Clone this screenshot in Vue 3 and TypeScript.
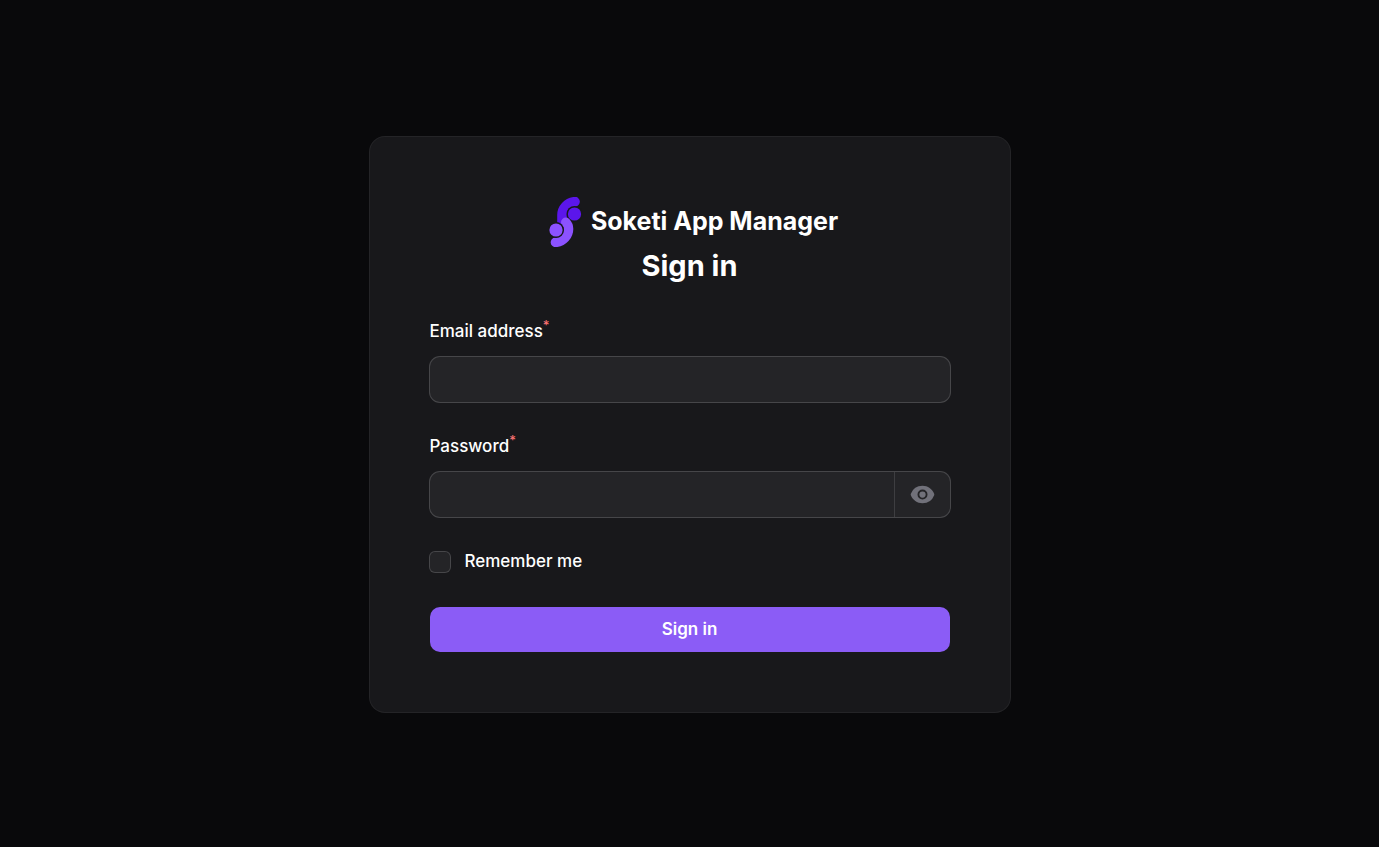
<script setup lang="ts">
import { ref } from 'vue'

const email = ref('')
const password = ref('')
const remember = ref(false)
const revealed = ref(false)
</script>

<template>
  <div class="page">
    <main class="card">
      <header class="header">
        <div class="brand">
          <svg class="logo" viewBox="1 0 50 50" aria-hidden="true">
            <path d="M35 4.6C27 5.4 22 11.5 22 18V25" fill="none" stroke="#5b16eb" stroke-width="9.6" stroke-linecap="round" />
            <circle cx="34.5" cy="17" r="8" fill="#18181b" />
            <circle cx="34.5" cy="17" r="6.6" fill="#5b16eb" />
            <path d="M15.5 45.4C23.5 44.6 28.5 38.5 28.5 32C28.5 29 27.5 27 25.8 25.3" fill="none" stroke="#8c52ff" stroke-width="9.6" stroke-linecap="round" />
            <circle cx="16" cy="33" r="8" fill="#18181b" />
            <circle cx="16" cy="33" r="6.6" fill="#8c52ff" />
          </svg>
          <span class="brand-name">Soketi App Manager</span>
        </div>
        <h1 class="title">Sign in</h1>
      </header>

      <form class="form" @submit.prevent>
        <div class="field">
          <label class="label" for="email">Email address<sup class="required">*</sup></label>
          <div class="control">
            <input id="email" v-model="email" class="input" type="email" autocomplete="email" required />
          </div>
        </div>

        <div class="field">
          <label class="label" for="password">Password<sup class="required">*</sup></label>
          <div class="control">
            <input id="password" v-model="password" class="input" :type="revealed ? 'text' : 'password'" autocomplete="current-password" required />
            <div class="suffix">
              <button class="reveal" type="button" aria-label="Show password" @click="revealed = !revealed">
                <svg viewBox="0 0 20 20" fill="currentColor" aria-hidden="true">
                  <path d="M10 12.5a2.5 2.5 0 1 0 0-5 2.5 2.5 0 0 0 0 5Z" />
                  <path fill-rule="evenodd" clip-rule="evenodd" d="M.664 10.59a1.651 1.651 0 0 1 0-1.186A10.004 10.004 0 0 1 10 3c4.257 0 7.893 2.66 9.336 6.41.147.381.146.804 0 1.186A10.004 10.004 0 0 1 10 17c-4.257 0-7.893-2.66-9.336-6.41ZM14 10a4 4 0 1 1-8 0 4 4 0 0 1 8 0Z" />
                </svg>
              </button>
            </div>
          </div>
        </div>

        <label class="remember" for="remember">
          <input id="remember" v-model="remember" class="checkbox" type="checkbox" />
          <span>Remember me</span>
        </label>

        <button class="submit" type="submit">Sign in</button>
      </form>
    </main>
  </div>
</template>

<style>
body {
  background: #09090b;
}
</style>

<style scoped>
.page {
  box-sizing: border-box;
  display: flex;
  align-items: center;
  justify-content: center;
  min-height: 100vh;
  padding: 2px 0 0;
  background: #09090b;
  color: #fff;
  font-family: Inter, "Liberation Sans", sans-serif;
}

.card {
  box-sizing: border-box;
  width: 100%;
  max-width: 640px;
  padding: 60px;
  border-radius: 15px;
  background: #18181b;
  box-shadow: 0 0 0 1px #242427;
}

.header {
  display: flex;
  flex-direction: column;
  align-items: center;
}

.brand {
  display: flex;
  align-items: center;
}

.logo {
  width: 50px;
  height: 50px;
}

.brand-name {
  padding-bottom: 3px;
  font-size: 25px;
  font-weight: 700;
  line-height: 30px;
}

.title {
  margin: 0;
  font-size: 29px;
  font-weight: 700;
  line-height: 38px;
}

.form {
  display: flex;
  flex-direction: column;
  gap: 30px;
  margin-top: 32px;
}

.field {
  display: flex;
  flex-direction: column;
  gap: 12px;
}

.label,
.remember {
  font-size: 17px;
  font-weight: 500;
  line-height: 28px;
}

.required {
  position: relative;
  top: -7px;
  color: #f87171;
  font-size: 13px;
  line-height: 0;
  vertical-align: baseline;
}

.control {
  display: flex;
  height: 45px;
  border-radius: 10px;
  background: #242427;
  box-shadow: 0 0 0 1px #464649;
}

.control:focus-within {
  box-shadow: 0 0 0 2px #8b5cf6;
}

.input {
  flex: 1;
  min-width: 0;
  padding: 0 15px;
  border: 0;
  outline: 0;
  background: transparent;
  color: #fff;
  font: inherit;
  font-size: 17px;
}

.suffix {
  display: flex;
  align-items: center;
  padding: 0 15px;
  border-left: 1px solid #3e3e41;
}

.reveal {
  display: flex;
  padding: 0;
  border: 0;
  background: transparent;
  color: #71717a;
  cursor: pointer;
}

.reveal svg {
  width: 25px;
  height: 25px;
}

.remember {
  display: flex;
  align-items: flex-start;
  gap: 15px;
}

.checkbox {
  appearance: none;
  width: 20px;
  height: 20px;
  margin: 5px 0;
  border-radius: 5px;
  background: #242427;
  box-shadow: 0 0 0 1px #464649;
}

.checkbox:checked {
  background: #8b5cf6;
}

.submit {
  height: 45px;
  padding: 0 15px 2px;
  border: 0;
  border-radius: 10px;
  background: #8b5cf6;
  color: #fff;
  font: inherit;
  font-size: 17px;
  font-weight: 600;
  cursor: pointer;
}
</style>
